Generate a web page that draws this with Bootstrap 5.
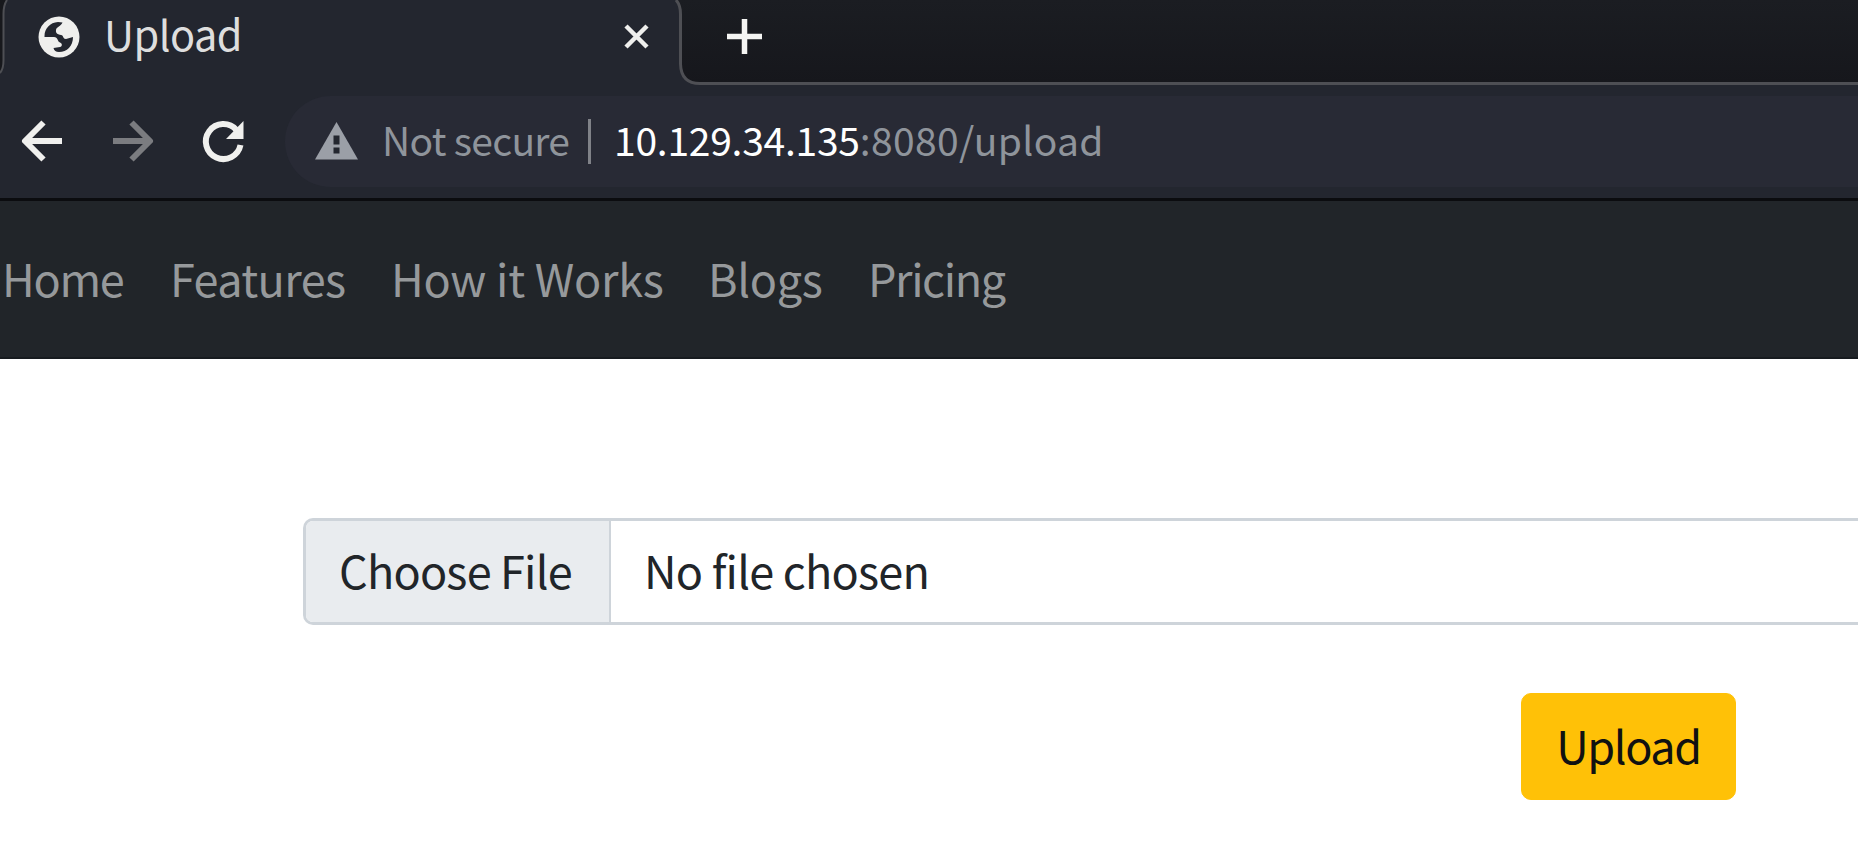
<!DOCTYPE html>
<html lang="en">
<head>
<meta charset="utf-8">
<title>Upload</title>
<link href="https://cdn.jsdelivr.net/npm/bootstrap@5.3.0/dist/css/bootstrap.min.css" rel="stylesheet">
<style>
body{font-family:"Noto Sans CJK SC",sans-serif;font-size:45px;line-height:60px;background:#fff;overflow:hidden;white-space:nowrap}
svg{display:block;flex:none}
.tabstrip{height:85px;background:#23262f}
.tab-active{width:638px;font-size:41.5px;letter-spacing:-.5px;color:#dedede;padding:2px 0 21px 6px}
.tab-title{margin-left:24px}
.globe{margin-top:8px}
.tab-close{margin:7px 21px 0 0}
.tab-add{margin:19px 0 0 27px}
.strip-rest{border-bottom:3px solid #4e4f54;background:linear-gradient(#1b1d22,#16171c);height:85px}
.toolbar{height:113px;background:#23262f}
.omnibox{margin:11px 0;height:91px;border-radius:46px 0 0 46px;background:#282a35;font-size:39px;padding:0 0 6px 30px}
.omnibox svg{margin-top:4px}
.quiet{color:#8f949b}
.secure-label{margin-left:23px;width:206px;letter-spacing:-.7px}
.host{color:#fff;margin-left:23px;letter-spacing:-.25px}
.path{letter-spacing:.35px}
.divider{width:3px;height:45px;background:#808288;margin-top:5px}
.site-nav{height:161px;background:#212529;border-top:3px solid #0b0c0f;border-bottom:2px solid #171b1f;padding:0 0 3px 2px}
.site-nav .nav-link{color:#96999b;padding:0}
.nav-home{width:168px;letter-spacing:-1.3px}
.nav-features{width:221px;letter-spacing:-.6px}
.nav-how{width:317px;letter-spacing:-.25px}
.nav-blogs{width:160px;letter-spacing:-.3px}
.nav-pricing{letter-spacing:-1.4px}
.main-area{padding:159px 0 0 303px}
.file-box{height:107px;border:3px solid #ced4da;border-right:0;border-radius:10px 0 0 10px;color:#212529;overflow:hidden}
.choose{width:305px;background:#e9ecef;border-right:2px solid #ced4da;padding:0 0 4px 33px;letter-spacing:-.8px}
.chosen{padding:0 0 4px 33px;letter-spacing:-.75px}
.btn-upload{margin:68px 0 0 1218px;width:215px;height:107px;border-radius:10px;font-size:45px;line-height:60px;letter-spacing:-1.4px;padding:0 0 4px;color:#111}
</style>
<script src="https://cdn.jsdelivr.net/npm/bootstrap@5.3.0/dist/js/bootstrap.bundle.min.js"></script>
</head>
<body>
<header>
  <div class="tabstrip d-flex">
    <svg width="32" height="85" viewBox="0 0 32 85"><path d="M0 0H7Q3.500 5 3.500 14V60Q3.500 69 0 73Z" fill="#17181c"/><path d="M7 0Q3.500 5 3.500 14V60Q3.500 69 0 73" fill="none" stroke="#4e4f54" stroke-width="2"/></svg>
    <div class="tab-active d-flex align-items-center">
      <svg class="globe" width="42" height="42" viewBox="38 15.500 42 42"><circle cx="59" cy="36.500" r="20.500" fill="#efefed"/><path d="M44.500 35.500C44.500 28 50 22 58 21.500L62.500 22C61 26 56.500 26 56 29.500C55.500 33 58 34 61 34.500C64 35 62.500 38.500 66 38.500L73 36.500C73 45.500 67 51.500 59 51.500C56 51.500 54 50 53.500 47.500L60 46.500C62.500 46 62.500 43 60 42C57.500 41.500 58 36.500 54 36.500H44.500Z" fill="#23262f"/></svg>
      <span class="tab-title">Upload</span>
      <svg class="tab-close ms-auto" width="25" height="25" viewBox="0 0 25 25"><path d="M2 2L23 23M23 2L2 23" stroke="#efefed" stroke-width="4.500"/></svg>
    </div>
    <svg width="30" height="85" viewBox="670 0 30 85"><defs><linearGradient id="g" x2="0" y2="1"><stop stop-color="#1b1d22"/><stop offset="1" stop-color="#16171c"/></linearGradient></defs><path d="M676 0Q680.500 5 680.500 14V64Q681 83.500 700 83.500V0Z" fill="url(#g)"/><path d="M676 0Q680.500 5 680.500 14V64Q681 83.500 700 83.500" fill="none" stroke="#4e4f54" stroke-width="3"/></svg>
    <div class="strip-rest flex-fill"><svg class="tab-add" width="35" height="35" viewBox="0 0 35 35"><path d="M17.500 0V35M0 17.500H35" stroke="#f5f5f3" stroke-width="5.500"/></svg></div>
  </div>
  <div class="toolbar d-flex">
    <svg width="285" height="113" viewBox="0 85 285 113" fill="none" stroke-width="6" stroke-linejoin="round">
      <path d="M62 141H26M43.500 122.500L25 141L43.500 159.500" stroke="#f0f0ee"/>
      <path d="M113 141H149M131.500 122.500L150 141L131.500 159.500" stroke="#7b7c80"/>
      <path d="M240.500 145A17.500 17.500 0 1 1 236.500 130" stroke="#f0f0ee"/>
      <path d="M243.500 121V139H226Z" fill="#f0f0ee"/>
    </svg>
    <div class="omnibox flex-fill d-flex align-items-center">
      <svg width="44" height="38" viewBox="0 0 44 38"><path d="M21.500 0L43 37.500H0Z" fill="#9b9fa7"/><path d="M18.500 13.500H24.500V22.500H18.500ZM18.500 25.500H24.500V31.500H18.500Z" fill="#23262f"/></svg>
      <span class="quiet secure-label">Not secure</span>
      <span class="divider"></span>
      <span class="host">10.129.34.135</span><span class="quiet path">:8080/upload</span>
    </div>
  </div>
</header>
<nav class="site-nav d-flex align-items-center">
  <a class="nav-link nav-home">Home</a>
  <a class="nav-link nav-features">Features</a>
  <a class="nav-link nav-how">How it Works</a>
  <a class="nav-link nav-blogs">Blogs</a>
  <a class="nav-link nav-pricing">Pricing</a>
</nav>
<main class="main-area">
  <div class="file-box d-flex align-items-stretch">
    <span class="choose d-flex align-items-center">Choose File</span>
    <span class="chosen d-flex align-items-center">No file chosen</span>
  </div>
  <button class="btn btn-warning btn-upload d-flex align-items-center justify-content-center" type="button">Upload</button>
</main>
</body>
</html>
